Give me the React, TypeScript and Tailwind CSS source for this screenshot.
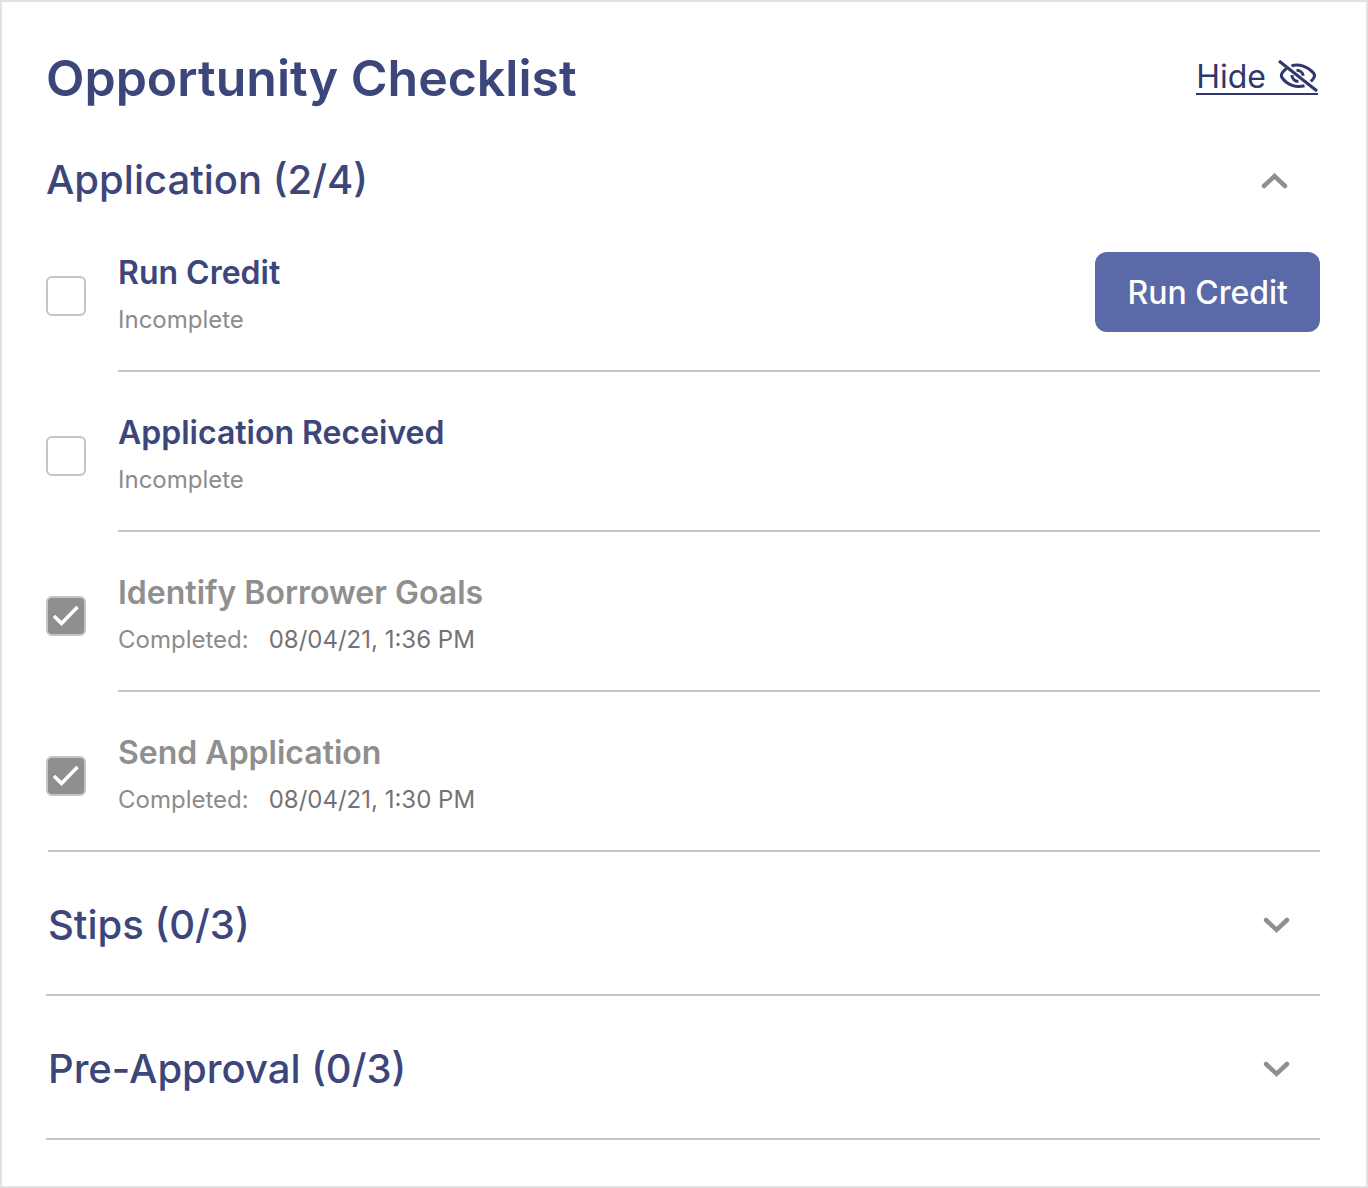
import { useState } from "react";

type Item = { id: string; title: string; done?: string; action?: string };

const items: Item[] = [
  { id: "run-credit", title: "Run Credit", action: "Run Credit" },
  { id: "received", title: "Application Received" },
  { id: "goals", title: "Identify Borrower Goals", done: "08/04/21, 1:36 PM" },
  { id: "send", title: "Send Application", done: "08/04/21, 1:30 PM" },
];

function Chevron({ up = false }: { up?: boolean }) {
  return (
    <svg width="28" height="18" viewBox="0 0 28 18" fill="none" stroke="#8f8f8f" strokeWidth="4.500" strokeLinecap="round" aria-hidden="true">
      <path d={up ? "M4 15 14.500 5.200 25 15" : "M4 4 14.500 13.800 25 4"} />
    </svg>
  );
}

function EyeOff() {
  return (
    <svg width="40" height="32" viewBox="0 0 40 32" fill="none" stroke="#2f376c" strokeWidth="3" className="overflow-visible" aria-hidden="true">
      <path d="M1 0 39 30" />
      <path d="M13.500 4.900C21 2.500 30 5.500 35.500 12c1.300 1.600 1.300 3.400.2 5-.8 1.200-1.700 2.300-2.900 3.400" />
      <path d="M8.500 7.500C6.500 9 5 10.700 4 12.300c-.9 1.500-.8 3.200.2 4.700C9.500 24 18 27 26.500 24.700" />
      <path d="M18.500 9.300c3.500 0 6.300 2.300 6.700 5.400M13.800 14.200c.3 3.500 3 6.100 6.600 6.300" />
    </svg>
  );
}

function Row({ item, last }: { item: Item; last: boolean }) {
  const [checked, setChecked] = useState(Boolean(item.done));
  return (
    <li className={last ? "flex h-40 border-b-2 border-[#c4c4c4]" : "flex h-40"}>
      <div className="relative mt-16 -ml-0.5 mr-8 size-10 shrink-0">
        <input
          id={item.id}
          type="checkbox"
          checked={checked}
          onChange={(e) => setChecked(e.target.checked)}
          className="peer block size-10 appearance-none rounded-md border-2 border-[#c4c4c4] bg-white checked:bg-[#8f8f8f]"
        />
        <svg viewBox="0 0 40 40" fill="none" stroke="white" strokeWidth="3.600" aria-hidden="true" className="pointer-events-none absolute inset-0 hidden peer-checked:block">
          <path d="m8 20 7.500 7.500L31.500 11" />
        </svg>
      </div>
      <div className={last ? "flex flex-1 justify-between pt-10" : "flex flex-1 justify-between border-b-2 border-[#c4c4c4] pt-10"}>
        <div>
          <label htmlFor={item.id} className={item.done ? "block text-[32px] leading-[42px] font-semibold text-[#8f8f8f]" : "block text-[32px] leading-[42px] font-semibold text-[#3c467b]"}>
            {item.title}
          </label>
          <p className="mt-2 flex gap-5 text-2xl leading-9 text-[#8c8c8c]">
            <span>{item.done ? "Completed:" : "Incomplete"}</span>
            {item.done && <time className="text-[#737373]">{item.done}</time>}
          </p>
        </div>
        {item.action && (
          <button type="button" className="h-20 rounded-xl bg-[#5a6aa8] px-8 pt-0.5 text-[32px] font-medium text-white">
            {item.action}
          </button>
        )}
      </div>
    </li>
  );
}

function Section({ title }: { title: string }) {
  return (
    <button type="button" className="-ml-0.5 flex h-36 items-center justify-between border-b-2 border-[#c4c4c4] pt-1 pr-[30px] pl-0.5 text-[40px] font-medium text-[#3c467b]">
      <span>{title}</span>
      <Chevron />
    </button>
  );
}

export default function App() {
  return (
    <main className="flex min-h-screen flex-col border-2 border-[#e2e2e2] bg-white px-[46px] pt-11 pb-11 font-['Inter',sans-serif]">
      <header className="-ml-0.5 flex h-16 items-center justify-between">
        <h1 className="text-[50px] leading-16 font-semibold text-[#3c467b]">Opportunity Checklist</h1>
        <a href="#hide" className="mr-0.5 flex items-center gap-3 border-b-2 border-[#2f376c] text-[32px] leading-8 text-[#2f376c]">
          Hide
          <EyeOff />
        </a>
      </header>
      <button type="button" aria-expanded="true" className="mt-[38px] -ml-0.5 flex h-16 items-center justify-between pr-8 text-[40px] font-medium text-[#3c467b]">
        <span>Application (2/4)</span>
        <Chevron up />
      </button>
      <ul>
        {items.map((item, i) => (
          <Row key={item.id} item={item} last={i === items.length - 1} />
        ))}
      </ul>
      <Section title="Stips (0/3)" />
      <Section title="Pre-Approval (0/3)" />
    </main>
  );
}
